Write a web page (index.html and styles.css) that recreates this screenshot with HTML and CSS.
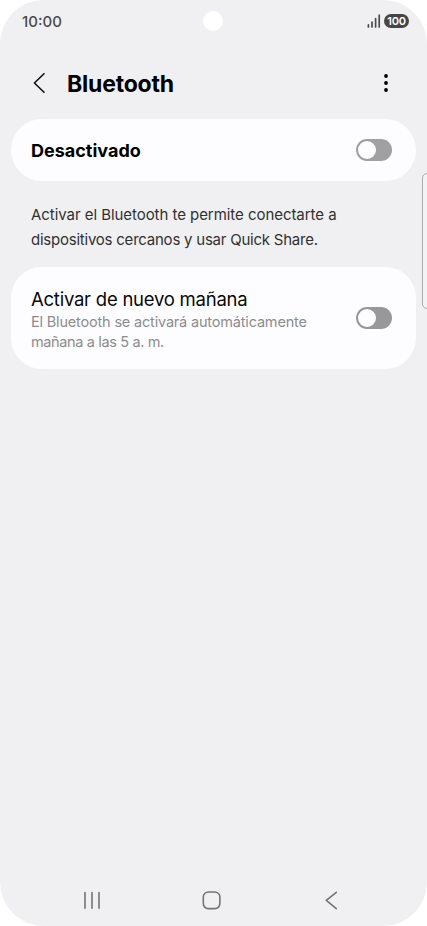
FILE: index.html
```html
<!DOCTYPE html>
<html lang="es">
<head>
<meta charset="utf-8">
<title>Bluetooth</title>
<link rel="stylesheet" href="styles.css">
</head>
<body>
<div class="phone">
  <header class="status">
    <span class="clock">10:00</span>
    <span class="camera"></span>
    <div class="indicators">
      <svg class="signal" width="14" height="14" viewBox="0 0 14 14"><path d="M1.4 10.9V12.9M5 8V12.9M8.6 4.7V12.9M12.2 1.2V12.9"/></svg>
      <span class="battery">100</span>
    </div>
  </header>
  <div class="titlebar">
    <svg class="back" width="14" height="22" viewBox="0 0 14 22"><path d="M12 1.7 2.4 11 12 20.3"/></svg>
    <h1 class="title">Bluetooth</h1>
    <svg class="more" width="6" height="20" viewBox="0 0 6 20"><circle cx="3" cy="3" r="1.9"/><circle cx="3" cy="10" r="1.9"/><circle cx="3" cy="17" r="1.9"/></svg>
  </div>
  <main>
    <section class="card master">
      <h2 class="state">Desactivado</h2>
      <span class="switch"></span>
    </section>
    <p class="info"><span class="info1">Activar el Bluetooth te permite conectarte a</span><br><span class="info2">dispositivos cercanos y usar Quick Share.</span></p>
    <section class="card option">
      <div class="copy">
        <h3 class="name">Activar de nuevo mañana</h3>
        <p class="detail"><span class="detail1">El Bluetooth se activará automáticamente</span><br><span class="detail2">mañana a las 5 a. m.</span></p>
      </div>
      <span class="switch dark"></span>
    </section>
  </main>
  <span class="edge"></span>
  <nav class="nav">
    <svg width="20" height="20" viewBox="0 0 20 20"><path d="M3 2.5V18.3M10 2.5V18.3M17 2.5V18.3"/></svg>
    <svg width="20" height="20" viewBox="0 0 20 20"><rect x="1.3" y="2" width="16.6" height="16.6" rx="5"/></svg>
    <svg width="20" height="20" viewBox="0 0 20 20"><path d="M15.3 2.3 5.3 10.4 15.3 18.6"/></svg>
  </nav>
</div>
</body>
</html>
```
FILE: styles.css
```css
* { box-sizing: border-box; margin: 0; padding: 0; }
body { background: #fff; font-family: Inter, "Liberation Sans", sans-serif; }
.phone { position: relative; width: 427px; height: 926px; background: #f0f0f2; border-radius: 44px; overflow: hidden; display: flex; flex-direction: column; }
.status { display: grid; grid-template-columns: 1fr 20px 1fr; align-items: center; height: 42px; padding: 0 18px 0 22px; }
.clock { font-size: 15px; font-weight: 550; color: #4b4b4d; }
.camera { width: 20px; height: 20px; margin-left: -2.5px; border-radius: 50%; background: #fff; }
.indicators { display: flex; justify-content: flex-end; align-items: center; gap: 3px; }
.signal { fill: none; stroke: #4b4b4d; stroke-width: 1.7; stroke-linecap: round; }
.battery { width: 25px; height: 14px; border-radius: 7px; background: #464648; color: #fff; font-size: 11px; font-weight: 600; letter-spacing: -.2px; line-height: 14px; text-align: center; }
.titlebar { display: flex; align-items: center; height: 77px; padding: 5px 38px 0 32px; }
.back { fill: none; stroke: #111; stroke-width: 1.6; stroke-linecap: round; stroke-linejoin: round; }
.title { flex: 1; margin: 2px 0 0 21px; font-size: 23px; font-weight: 700; line-height: 30px; letter-spacing: -.2px; }
.more { fill: #000; }
main { padding: 0 11px; }
.card { display: flex; justify-content: space-between; align-items: center; background: #fdfdff; padding: 0 24px 0 20px; }
.master { height: 62px; border-radius: 31px; }
.state { font-size: 18px; font-weight: 650; }
.switch { flex: none; width: 36px; height: 22px; padding: 2px; border-radius: 11px; background: #a0a0a3; }
.switch::before { content: ""; display: block; width: 18px; height: 18px; border-radius: 50%; background: #fdfdff; }
.dark { background: #98989b; }
.info { padding: 21px 20px 15.4px; font-size: 15px; line-height: 25px; color: #303032; white-space: nowrap; }
.info1 { letter-spacing: -.05px; }
.info2 { letter-spacing: -.23px; }
.option { height: 102px; border-radius: 31px; }
.copy { padding-top: 3px; }
.name { font-size: 18.5px; font-weight: 400; line-height: 25px; letter-spacing: -.24px; color: #080808; }
.detail { font-size: 14.5px; line-height: 20px; color: #8c8c8f; white-space: nowrap; }
.detail1 { letter-spacing: -.18px; }
.detail2 { letter-spacing: -.36px; }
.edge { position: absolute; left: 422px; top: 173px; width: 12px; height: 136px; border: 1px solid #aaaaad; border-radius: 5px; background: #f3f3f5; }
.nav { display: flex; justify-content: space-between; margin-top: auto; padding: 0 86px 16px 82px; }
.nav svg { fill: none; stroke: #747476; stroke-width: 1.6; stroke-linecap: round; stroke-linejoin: round; }
```
